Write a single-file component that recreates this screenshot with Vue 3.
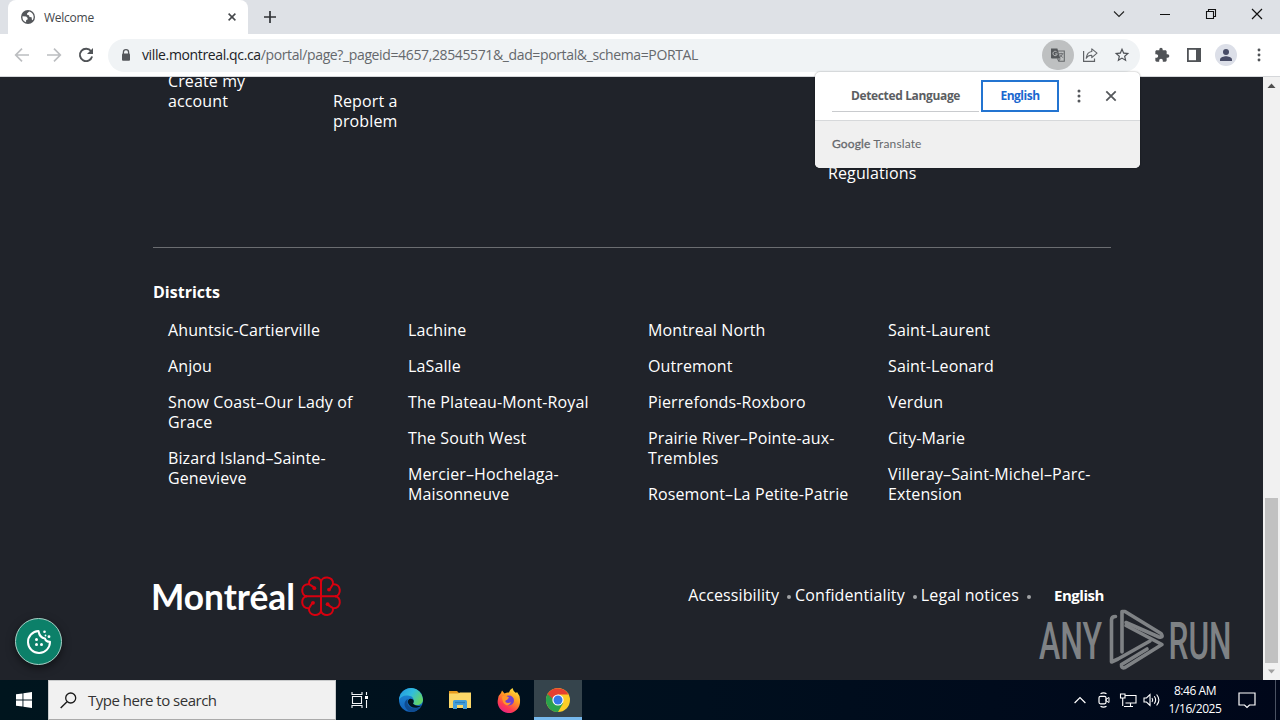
<script setup>
const districts = [
  ['Ahuntsic-Cartierville', 'Anjou', 'Snow Coast–Our Lady of Grace', 'Bizard Island–Sainte-Genevieve'],
  ['Lachine', 'LaSalle', 'The Plateau-Mont-Royal', 'The South West', 'Mercier–Hochelaga-Maisonneuve'],
  ['Montreal North', 'Outremont', 'Pierrefonds-Roxboro', 'Prairie River–Pointe-aux-Trembles', 'Rosemont–La Petite-Patrie'],
  ['Saint-Laurent', 'Saint-Leonard', 'Verdun', 'City-Marie', 'Villeray–Saint-Michel–Parc-Extension'],
]

const legalLinks = ['Accessibility', 'Confidentiality', 'Legal notices']

// one heart per quadrant of the rosette
const petals = [0, 90, 180, 270]
</script>

<template>
  <div class="desktop">
    <header class="tabstrip">
      <div class="tab">
        <svg class="globe" width="14" height="14" viewBox="0 0 14 14">
          <circle cx="7" cy="7" r="7" fill="#54575b" />
          <path d="M1.5 6.2 L5.2 6.4 L6.6 8 V9.4 L5.2 10 L5 12.2 A5.6 5.6 0 0 1 1.500 6.200Z M8.200 1.500 L6 3.600 L6.300 5 L8 5.300 L8.500 7 L10.600 7.300 L10.900 9.800 L11.600 10.200 A5.600 5.600 0 0 0 8.200 1.500Z" fill="#fff" />
        </svg>
        <span class="tab-title">Welcome</span>
        <svg class="tab-close" width="8" height="8" viewBox="0 0 8 8">
          <path d="M.6 .6 L7.4 7.4 M7.4 .6 L.6 7.4" stroke="#44474b" stroke-width="1.5" />
        </svg>
      </div>
      <svg class="new-tab" width="12" height="12" viewBox="0 0 12 12">
        <path d="M6 0 V12 M0 6 H12" stroke="#303236" stroke-width="1.7" />
      </svg>
      <div class="window-buttons">
        <svg width="46" height="28" viewBox="0 0 46 28"><path d="M18 11.5 L23 16.5 L28 11.5" fill="none" stroke="#222" stroke-width="1.1" /></svg>
        <svg width="46" height="28" viewBox="0 0 46 28"><path d="M18 14.5 H28" stroke="#111" /></svg>
        <svg width="46" height="28" viewBox="0 0 46 28"><path d="M18.5 11.5 H25.5 V18.5 H18.5Z M20.5 11.5 V9.5 H27.5 V16.5 H25.5" fill="none" stroke="#111" stroke-width="1.1" /></svg>
        <svg width="46" height="28" viewBox="0 0 46 28"><path d="M18 9 L28 19 M28 9 L18 19" stroke="#111" stroke-width="1.2" /></svg>
      </div>
    </header>

    <div class="toolbar">
      <div class="nav-buttons">
        <svg width="16" height="16" viewBox="0 0 16 16"><path d="M15 8 H2 M8 1.7 L1.7 8 L8 14.3" fill="none" stroke="#bcbec1" stroke-width="1.7" /></svg>
        <svg width="16" height="16" viewBox="0 0 16 16"><path d="M1 8 H14 M8 1.7 L14.3 8 L8 14.3" fill="none" stroke="#bcbec1" stroke-width="1.7" /></svg>
        <svg width="16" height="16" viewBox="0 0 16 16">
          <path d="M13.1 4.2 A6.2 6.2 0 1 0 14.1 9.5" fill="none" stroke="#505357" stroke-width="1.9" />
          <path d="M15 1 V7 H9Z" fill="#505357" />
        </svg>
      </div>
      <div class="omnibox">
        <svg class="lock" width="10" height="12" viewBox="0 0 10 12">
          <path d="M2.4 5 V3.3 a2.6 2.6 0 0 1 5.2 0 V5" fill="none" stroke="#54575b" stroke-width="1.3" />
          <rect x="1" y="4.4" width="8" height="7.4" rx="1" fill="#54575b" />
        </svg>
        <span class="url"><b>ville.montreal.qc.ca</b>/portal/page?_pageid=4657,28545571&amp;_dad=portal&amp;_schema=PORTAL</span>
        <span class="translate-button">
          <svg width="16" height="16" viewBox="0 0 16 16">
            <path d="M7.4 4 H14.3 V14.3 H8.8 L7.5 11.5" fill="none" stroke="#64676a" stroke-width="1.1" />
            <path d="M1 1.4 H7.4 L10.3 11.5 H2 a1 1 0 0 1 -1 -1Z" fill="#55585b" />
            <path d="M7 5.3 A2.2 2.2 0 1 0 7.3 6.9 H5.1" fill="none" stroke="#b9bbbc" stroke-width="1" />
            <path d="M9 6.7 H13.4 M11.2 5.8 V6.7 M12.5 6.8 Q12 9 9.8 10.4 M10 7.7 L12.8 10.7 M8.8 14 L10.3 11.7" fill="none" stroke="#64676a" stroke-width=".9" />
          </svg>
        </span>
        <svg class="share" width="16" height="16" viewBox="0 0 16 16">
          <path d="M1.6 4 V14.4 H12.5 V11.5" fill="none" stroke="#606367" stroke-width="1.2" />
          <path d="M9.8 1.8 L15 6.2 L9.8 10.6 V8.3 Q6 8.1 4.2 11.3 Q5 5 9.8 4.500Z" fill="none" stroke="#606367" stroke-width="1.1" stroke-linejoin="round" />
        </svg>
        <svg class="star" width="16" height="16" viewBox="1 1 22 22">
          <path d="M22 9.24l-7.19-.62L12 2 9.19 8.63 2 9.24l5.46 4.73L5.82 21 12 17.27 18.18 21l-1.63-7.03L22 9.24zM12 15.4l-3.76 2.27 1-4.28-3.32-2.88 4.38-.38L12 6.1l1.71 4.04 4.38.38-3.32 2.88 1 4.28L12 15.4z" fill="#4e5156" />
        </svg>
      </div>
      <div class="toolbar-actions">
        <svg width="16" height="16" viewBox="0 0 24 24">
          <path d="M20.5 11H19V7c0-1.1-.9-2-2-2h-4V3.5a2.5 2.5 0 0 0-5 0V5H4c-1.1 0-1.99.9-1.99 2v3.8H3.5c1.49 0 2.7 1.21 2.7 2.7s-1.21 2.7-2.7 2.7H2V20c0 1.1.9 2 2 2h3.8v-1.5c0-1.49 1.21-2.7 2.7-2.7s2.7 1.21 2.7 2.7V22H17c1.1 0 2-.9 2-2v-4h1.5a2.5 2.5 0 0 0 0-5z" fill="#505357" />
        </svg>
        <svg width="16" height="16" viewBox="0 0 16 16">
          <rect x="1.9" y="1.9" width="12.2" height="12.2" fill="#fff" stroke="#505357" stroke-width="1.8" />
          <rect x="10" y="1" width="5" height="14" fill="#505357" />
        </svg>
        <svg width="22" height="22" viewBox="0 0 22 22">
          <circle cx="11" cy="11" r="11" fill="#dcdfe8" />
          <circle cx="11" cy="8" r="3" fill="#484c66" />
          <path d="M5 17 v-1.5 c0-2.2 4-3.3 6-3.3 s6 1.1 6 3.3 V17Z" fill="#484c66" />
        </svg>
        <svg width="4" height="16" viewBox="0 0 4 16">
          <circle cx="2" cy="3" r="1.45" fill="#505357" />
          <circle cx="2" cy="8" r="1.45" fill="#505357" />
          <circle cx="2" cy="13" r="1.45" fill="#505357" />
        </svg>
      </div>
    </div>

    <div class="viewport">
      <main class="page">
        <section class="footer-links">
          <a class="link-account">Create my account</a>
          <a class="link-report">Report a problem</a>
          <a class="link-rules">Regulations</a>
        </section>

        <section class="districts">
          <h2>Districts</h2>
          <div class="district-columns">
            <ul v-for="(column, i) in districts" :key="i">
              <li v-for="name in column" :key="name">{{ name }}</li>
            </ul>
          </div>
        </section>

        <section class="footer-bottom">
          <svg class="logo" width="190" height="44" viewBox="0 0 190 44">
            <text x="-2" y="35.8" textLength="144" lengthAdjust="spacingAndGlyphs">Montréal</text>
            <g transform="translate(168 22.2)" fill="none" stroke="#d8000f" stroke-width="2">
              <path d="M0 -15 V15 M-15 0 H15" />
              <g v-for="angle in petals" :key="angle" :transform="`rotate(${angle})`">
                <path d="M0 -14 C0 -20.700 -13 -20.700 -12 -12 L-6.500 -8.500 M-14 0 C-20.700 0 -20.700 -13 -12 -12" />
                <circle cx="-6.600" cy="-8" r="1.900" fill="#d8000f" stroke="none" />
              </g>
            </g>
          </svg>
          <nav class="legal">
            <span v-for="link in legalLinks" :key="link" class="legal-item"><a>{{ link }}</a><i></i></span>
            <strong>English</strong>
          </nav>
        </section>
      </main>

      <div class="scrollbar">
        <svg width="17" height="17" viewBox="0 0 17 17"><path d="M4.5 11 L8.5 6.5 L12.5 11Z" fill="#505050" /></svg>
        <div class="thumb"></div>
        <svg width="17" height="17" viewBox="0 0 17 17"><path d="M5 6.5 L8.5 10.5 L12 6.5Z" fill="#a0a0a0" /></svg>
      </div>

      <button type="button" class="cookie-button" title="Cookies">
        <svg width="26" height="26" viewBox="0 0 26 26">
          <path d="M12.5 2 A11 11 0 1 0 24 12.8 Q19.5 12.8 19 9.5 Q13.5 8.8 12.5 2Z" fill="none" stroke="#fff" stroke-width="2" stroke-linejoin="round" />
          <g fill="#fff">
            <circle cx="10.5" cy="10.5" r="1.5" />
            <circle cx="10.5" cy="15.5" r="1.5" />
            <circle cx="15.5" cy="15.5" r="1.5" />
            <circle cx="18.5" cy="2.8" r="1.3" />
            <circle cx="19.5" cy="6.5" r=".9" />
            <circle cx="23" cy="7.7" r="1.4" />
          </g>
        </svg>
      </button>

      <svg class="watermark" width="194" height="64" viewBox="0 0 194 64">
        <text x="1" y="51" textLength="63" lengthAdjust="spacingAndGlyphs">ANY</text>
        <text x="130.500" y="51" textLength="63" lengthAdjust="spacingAndGlyphs">RUN</text>
        <g fill="none" stroke="#7f8285" stroke-width="3.600" stroke-linejoin="round" stroke-linecap="round">
          <path d="M77.500 8.500 Q73.500 8.500 73.500 12 V54 L80 51 L112 33" />
          <path d="M84 44 V3.500 H87 L123 25.500 Q126 30 121 29 L88 14.500" />
          <path d="M88 17.500 L124 36.500 L87 59.500 Q83 61 83.500 56.500 L109 41" />
        </g>
      </svg>
    </div>

    <div class="translate-popup">
      <div class="popup-head">
        <span class="lang">Detected Language</span>
        <span class="lang selected">English</span>
        <svg width="4" height="14" viewBox="0 0 4 14">
          <circle cx="2" cy="2" r="1.5" fill="#55585c" />
          <circle cx="2" cy="7" r="1.5" fill="#55585c" />
          <circle cx="2" cy="12" r="1.5" fill="#55585c" />
        </svg>
        <svg class="popup-close" width="12" height="12" viewBox="0 0 12 12"><path d="M1.3 1.3 L10.7 10.7 M10.7 1.3 L1.3 10.7" stroke="#55585c" stroke-width="1.8" /></svg>
      </div>
      <div class="popup-foot"><b>Google</b> Translate</div>
    </div>

    <footer class="taskbar">
      <div class="start">
        <svg width="16" height="16" viewBox="0 0 16 16"><path d="M0 2.3 L6.5 1.4 V7.5 H0Z M7.4 1.3 L16 0 V7.5 H7.4Z M0 8.4 H6.5 V14.6 L0 13.7Z M7.4 8.4 H16 V16 L7.4 14.7Z" fill="#fff" /></svg>
      </div>
      <div class="search">
        <svg width="17" height="17" viewBox="0 0 17 17">
          <circle cx="10.7" cy="6" r="5" fill="none" stroke="#1a1a1a" stroke-width="1.3" />
          <path d="M7 9.7 L.7 16" stroke="#1a1a1a" stroke-width="1.4" />
        </svg>
        <span>Type here to search</span>
      </div>
      <div class="apps">
        <div class="app">
          <svg width="18" height="16" viewBox="0 0 18 16">
            <path d="M1 0 V2.5 H11 V0 M1.5 4.5 H10.5 V11.5 H1.5Z M1 16 V13.5 H11 V16 M15.5 0 V3 M15.5 8 V16" fill="none" stroke="#f2f5f7" stroke-width="1.1" />
            <rect x="14" y="4" width="3" height="3" fill="#fff" />
          </svg>
        </div>
        <div class="app">
          <svg width="26" height="26" viewBox="0 0 26 26">
            <defs>
              <linearGradient id="edge-top" x1="0" y1="0" x2="1" y2=".5"><stop offset="0" stop-color="#2295df" /><stop offset=".55" stop-color="#31bddd" /><stop offset="1" stop-color="#62d36b" /></linearGradient>
              <linearGradient id="edge-left" x1="0" y1="0" x2="0" y2="1"><stop offset="0" stop-color="#1d8fdb" /><stop offset="1" stop-color="#1260b8" /></linearGradient>
            </defs>
            <circle cx="13" cy="13" r="12" fill="url(#edge-left)" />
            <path d="M1.2 11 A12 12 0 0 1 25 12.5 C25 19 17 19 15 16.5 C16.5 14 16 9 10 8.500 C6 8 2.500 9.500 1.200 13Z" fill="url(#edge-top)" />
            <path d="M9.800 12 C7.500 18 13 24 22.500 20 A12 12 0 0 1 13 25 C5 22 5 14 9.800 12Z" fill="#0f4c91" />
            <path d="M15 12.500 C12 10.500 9 13 10 16 C12 21 18 22.500 24 18.500 C20 19.500 16.500 18.500 15 16.500 C16 15 16 13.500 15 12.500Z" fill="#02141e" />
          </svg>
        </div>
        <div class="app">
          <svg width="22" height="20" viewBox="0 0 22 20">
            <path d="M0 1 H8 L10 3 H21 V7 H0Z" fill="#e79b1e" />
            <path d="M0 3.5 H9 L11 2.5 H22 V18 H0Z" fill="#fbd768" />
            <path d="M4 19 V11.500 a1.500 1.500 0 0 1 1.500-1.500 H16.500 a1.500 1.500 0 0 1 1.500 1.500 V19 H14 V15 H8 V19Z" fill="#459fdb" />
            <path d="M6 12.500 H16" stroke="#2b7fbd" stroke-width="1.300" />
          </svg>
        </div>
        <div class="app">
          <svg width="24" height="24" viewBox="0 0 24 24">
            <defs>
              <linearGradient id="fox" x1=".8" y1="0" x2=".25" y2="1"><stop offset="0" stop-color="#ffe83e" /><stop offset=".4" stop-color="#ff9a22" /><stop offset=".75" stop-color="#ff3b50" /><stop offset="1" stop-color="#e5208c" /></linearGradient>
            </defs>
            <path d="M4 5 L5 2.500 L7.500 5.500 Q10 4 12 4.500 Q12.500 1.500 15.500 0 Q16 3 19 5 L20 4 Q23.500 8 23 13 A11.200 11.200 0 1 1 1 11 Q1.500 7 4 5Z" fill="url(#fox)" />
            <circle cx="12" cy="12.500" r="5" fill="#7140cf" />
            <path d="M5 8.500 Q8.500 6.500 12 9.500 L10 12 Q8 12 8.500 14 Q11 16 14 14 Q13 18 9 17 Q5 15 5 8.500Z" fill="#ff9629" />
          </svg>
        </div>
        <div class="app active">
          <svg width="24" height="24" viewBox="0 0 24 24">
            <circle cx="12" cy="12" r="12" fill="#fccd26" />
            <path d="M1.600 6 A12 12 0 0 0 12 24 L17.200 15 L12 12Z" fill="#2aa24c" />
            <path d="M1.600 6 A12 12 0 0 1 22.400 6.400 H12 L7 15Z" fill="#e6402f" />
            <path d="M1.600 6 L6.800 15 L8 12Z" fill="#2aa24c" />
            <circle cx="12" cy="12" r="5.600" fill="#fff" />
            <circle cx="12" cy="12" r="4.500" fill="#3478e6" />
          </svg>
        </div>
      </div>
      <div class="tray">
        <svg class="chevron" width="12" height="8" viewBox="0 0 12 8"><path d="M.6 7 L6 1.5 L11.4 7" fill="none" stroke="#fff" stroke-width="1.2" /></svg>
        <svg class="camera" width="12" height="16" viewBox="0 0 12 16">
          <path d="M2.5 1.800 Q5.500 0 8.500 1.800 M2.500 14.200 Q5.500 16 8.500 14.200" fill="none" stroke="#fff" stroke-width="1.100" />
          <rect x="1" y="4.300" width="7" height="7.500" rx="1.500" fill="none" stroke="#fff" stroke-width="1.200" />
          <path d="M8 7.200 L11 5.500 V10.500 L8 8.800Z" fill="none" stroke="#fff" />
        </svg>
        <svg class="network" width="17" height="15" viewBox="0 0 17 15">
          <path d="M5.500 2.500 H16 V10 H5.500 M.5 1 H5 V5 H.5Z M2.700 5 V13 M10.500 10 V13.500 M4 13.500 H13" fill="none" stroke="#fff" stroke-width="1.100" />
        </svg>
        <svg class="volume" width="18" height="14" viewBox="0 0 18 14">
          <path d="M1 5 H3.500 L7 1.500 V12.500 L3.500 9 H1Z M9 5 Q10.500 7 9 9 M11.300 3.300 Q14 7 11.300 10.700 M13.600 1.500 Q18.200 7 13.600 12.500" fill="none" stroke="#fff" stroke-width="1.100" />
        </svg>
        <div class="clock"><span class="time">8:46 AM</span><span class="date">1/16/2025</span></div>
        <svg class="notice" width="18" height="17" viewBox="0 0 18 17"><path d="M1 1 H17 V13 H11.500 L9 15.500 L6.500 13 H1Z" fill="none" stroke="#fff" stroke-width="1.200" /></svg>
      </div>
      <div class="show-desktop"></div>
    </footer>
  </div>
</template>

<style>
body {
  margin: 0;
  overflow: hidden;
}
</style>

<style scoped>
.desktop {
  position: relative;
  width: 1280px;
  height: 720px;
  display: flex;
  flex-direction: column;
  overflow: hidden;
  background: #20232a;
  font-family: 'Open Sans', 'Noto Sans', sans-serif;
}

svg {
  display: block;
  flex: none;
  overflow: visible;
}

.tabstrip {
  height: 34px;
  flex: none;
  display: flex;
  align-items: center;
  padding-left: 8px;
  background: #dee1e6;
}

.tab {
  width: 240px;
  height: 34px;
  box-sizing: border-box;
  display: flex;
  align-items: center;
  padding: 0 12px 0 13px;
  background: #fff;
  border-radius: 8px 8px 0 0;
}

.tab-title {
  flex: 1;
  margin-left: 9px;
  font-size: 12px;
  letter-spacing: -0.25px;
  color: #45484c;
}

.new-tab {
  margin-left: 16px;
}

.window-buttons {
  height: 28px;
  display: flex;
  align-self: flex-start;
  margin-left: auto;
}

.toolbar {
  height: 43px;
  flex: none;
  box-sizing: border-box;
  display: flex;
  align-items: center;
  border-bottom: 1px solid #d5d7da;
  background: #fff;
}

.nav-buttons {
  display: flex;
  gap: 16px;
  margin-left: 14px;
}

.omnibox {
  width: 1032px;
  height: 33px;
  box-sizing: border-box;
  display: flex;
  align-items: center;
  margin-left: 14px;
  padding: 0 10px 0 13px;
  border-radius: 17px;
  background: #f0f3f5;
}

.url {
  margin-left: 11px;
  font-size: 14px;
  line-height: 20px;
  letter-spacing: -0.37px;
  white-space: nowrap;
  color: #65686c;
}

.url b {
  font-weight: 400;
  color: #202226;
}

.translate-button {
  width: 32px;
  height: 30px;
  display: flex;
  align-items: center;
  justify-content: center;
  margin-left: auto;
  border-radius: 16px;
  background: #bec0c1;
}

.share {
  margin-left: 8px;
}

.star {
  margin-left: 16px;
}

.toolbar-actions {
  display: flex;
  align-items: center;
  margin-left: 14px;
}

.toolbar-actions svg + svg {
  margin-left: 16px;
}

.toolbar-actions svg:nth-child(3) {
  margin-left: 13px;
}

.toolbar-actions svg:nth-child(4) {
  margin-left: 19.5px;
}

.viewport {
  position: relative;
  flex: 1;
  min-height: 0;
  display: flex;
  overflow: hidden;
}

.page {
  flex: 1;
  overflow: hidden;
  padding: 0 152px 0 153px;
  font-size: 16px;
  line-height: 20px;
  letter-spacing: 0.12px;
  color: #fff;
}

.footer-links {
  height: 176px;
  display: flex;
  align-items: flex-start;
  margin-top: -6px;
  padding-left: 15px;
  border-bottom: 1px solid #6b6d71;
}

.link-account {
  width: 90px;
}

.link-report {
  width: 75px;
  margin: 20px 0 0 75px;
}

.link-rules {
  margin: 92px 0 0 420px;
}

.districts {
  height: 269px;
  padding-top: 34px;
}

h2 {
  margin: 0 0 18px;
  font-size: 16px;
  line-height: 20px;
  letter-spacing: 0;
  font-weight: 700;
}

.district-columns {
  display: grid;
  grid-template-columns: repeat(4, 240px);
}

ul {
  margin: 0;
  padding: 0 17px 0 15px;
  list-style: none;
}

li {
  margin-bottom: 16px;
}

.footer-bottom {
  display: flex;
  align-items: flex-start;
  justify-content: space-between;
  margin-top: 23px;
}

.logo text {
  font-family: Lato, 'Open Sans', sans-serif;
  font-size: 36px;
  font-weight: 700;
  fill: #fff;
  letter-spacing: 0;
}

.legal {
  display: flex;
  margin: 11px 7px 0 0;
}

.legal-item {
  display: flex;
  align-items: center;
}

.legal-item i {
  width: 4px;
  height: 4px;
  margin: 3px 4px 0 8px;
  border-radius: 50%;
  background: #a0a2a5;
}

.legal strong {
  margin-left: 19px;
  font-size: 15px;
  letter-spacing: -0.45px;
}

.scrollbar {
  width: 17px;
  display: flex;
  flex-direction: column;
  background: #f1f1f1;
}

.thumb {
  width: 13px;
  height: 165px;
  margin: auto auto 0;
  background: #c1c1c1;
}

.cookie-button {
  position: absolute;
  left: 15px;
  bottom: 15px;
  width: 47px;
  height: 47px;
  display: flex;
  align-items: center;
  justify-content: center;
  padding: 0;
  border: 1px solid #a9d3c9;
  border-radius: 50%;
  background: #0c8069;
  box-shadow: 0 3px 8px rgba(0, 0, 0, 0.5);
}

.watermark {
  position: absolute;
  right: 48px;
  bottom: 8px;
}

.watermark text {
  font-family: Roboto, sans-serif;
  font-size: 51px;
  font-weight: 500;
  fill: #7f8285;
}

.translate-popup {
  position: absolute;
  left: 815px;
  top: 72px;
  width: 325px;
  height: 96px;
  overflow: hidden;
  border-radius: 5px;
  background: #fff;
  box-shadow: 0 0 2px rgba(0, 0, 0, 0.4);
  font-size: 12px;
}

.popup-head {
  height: 48px;
  display: flex;
  align-items: center;
  padding-left: 17px;
}

.lang {
  width: 147px;
  height: 31px;
  box-sizing: border-box;
  border-bottom: 1px solid #c9cbce;
  line-height: 30px;
  letter-spacing: -0.35px;
  text-align: center;
  font-weight: 700;
  color: #5b5e62;
}

.lang.selected {
  width: 78px;
  height: 32px;
  margin: 0 18px 0 2px;
  border: 2px solid #2374d1;
  line-height: 28px;
  letter-spacing: -0.5px;
  color: #1a67cf;
}

.popup-close {
  margin-left: 24px;
}

.popup-foot {
  height: 48px;
  box-sizing: border-box;
  padding-left: 17px;
  border-top: 1px solid #d7d9db;
  background: #f0f0f0;
  font-family: Lato, 'Open Sans', sans-serif;
  line-height: 46px;
  letter-spacing: 0.12px;
  color: #66696d;
}

.popup-foot b {
  font-weight: 400;
  -webkit-text-stroke: 0.3px #66696d;
}

.taskbar {
  height: 40px;
  flex: none;
  display: flex;
  background: linear-gradient(90deg, #00151e, #000f1e 55%, #00071a);
}

.start {
  width: 48px;
  display: flex;
  align-items: center;
  justify-content: center;
}

.search {
  width: 288px;
  box-sizing: border-box;
  display: flex;
  align-items: center;
  padding-left: 11px;
  border: 1px solid #c9cbcc;
  border-bottom-color: #aaa;
  background: #f1f1f1;
  font-size: 15px;
  letter-spacing: -0.5px;
  color: #333;
}

.search span {
  margin-left: 11px;
}

.apps {
  display: flex;
}

.app {
  width: 48px;
  display: flex;
  align-items: center;
  justify-content: center;
  margin-right: 1px;
}

.app:first-child {
  margin-right: 3px;
}

.app.active {
  margin: 0;
  box-sizing: border-box;
  border-bottom: 3px solid #76b9ed;
  padding-top: 3px;
  background: #35444c;
}

.tray {
  display: flex;
  align-items: center;
  margin-left: auto;
  padding-right: 19px;
  color: #fff;
}

.camera {
  margin-left: 12px;
}

.network {
  margin-left: 10px;
}

.volume {
  margin-left: 6px;
}

.notice {
  margin-left: 16px;
}

.clock {
  width: 54px;
  display: flex;
  flex-direction: column;
  align-items: center;
  margin-left: 7px;
  font-size: 12px;
  line-height: 18px;
  letter-spacing: -0.45px;
}

.show-desktop {
  width: 4px;
  border-left: 1px solid #4a5262;
}
</style>
